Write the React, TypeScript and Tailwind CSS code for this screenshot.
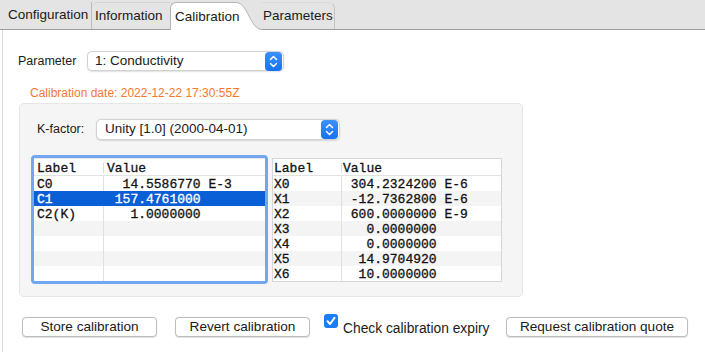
import React from "react";

const Stepper = () => (
  <div className="w-[17px] h-[19px] rounded-[4px] bg-gradient-to-b from-[#3a91ff] to-[#1572f0] flex items-center justify-center shrink-0">
    <svg width="17" height="19" viewBox="0 0 17 19">
      <path d="M5.5 7.5 L8.5 4.5 L11.5 7.5" fill="none" stroke="white" strokeWidth="1.5" strokeLinecap="round" strokeLinejoin="round" />
      <path d="M5.5 11.5 L8.5 14.5 L11.5 11.5" fill="none" stroke="white" strokeWidth="1.5" strokeLinecap="round" strokeLinejoin="round" />
    </svg>
  </div>
);

const leftRows: [string, string][] = [
  ["C0", "  14.5586770 E-3"],
  ["C1", " 157.4761000"],
  ["C2(K)", "   1.0000000"],
  ["", ""],
  ["", ""],
  ["", ""],
  ["", ""],
];

const rightRows: [string, string][] = [
  ["X0", " 304.2324200 E-6"],
  ["X1", " -12.7362800 E-6"],
  ["X2", " 600.0000000 E-9"],
  ["X3", "   0.0000000"],
  ["X4", "   0.0000000"],
  ["X5", "  14.9704920"],
  ["X6", "  10.0000000"],
];

const mono = "font-['Liberation_Mono',monospace] text-[13px] whitespace-pre [-webkit-text-stroke:0.3px]";

function Table({
  rows,
  labelW,
  pad,
  selected,
}: {
  rows: [string, string][];
  labelW: string;
  pad: string;
  selected?: number;
}) {
  return (
    <div className="flex flex-col bg-white">
      <div className="h-[17px] flex items-start border-b border-[#e2e2e2] text-[#111]">
        <div className={`${labelW} ${pad} ${mono} leading-[15px] pt-[2px] h-full relative`}>
          Label
          <div className="absolute right-0 top-[4px] h-[10px] w-px bg-[#dcdcdc]" />
        </div>
        <div className={`flex-1 ${pad} ${mono} leading-[15px] pt-[2px]`}>Value</div>
      </div>
      <div className="relative">
        {rows.map((r, i) => {
          const sel = i === selected;
          const bg = sel ? "bg-[#0a5fd6] text-white" : i % 2 === 1 ? "bg-[#f4f4f4] text-[#111]" : "bg-white text-[#111]";
          return (
            <div key={i} className={`h-[15px] flex ${bg}`}>
              <div className={`${labelW} ${pad} ${mono} leading-[13px] pt-[2px] ${sel ? "" : "border-r border-[#e0e0e0]"}`}>{r[0]}</div>
              <div className={`flex-1 ${pad} ${mono} leading-[13px] pt-[2px]`}>{r[1]}</div>
            </div>
          );
        })}
      </div>
    </div>
  );
}

const Button = ({ w, children }: { w: string; children: React.ReactNode }) => (
  <div
    className={`${w} h-[20px] mt-[3px] rounded-[4px] bg-white border border-[#bdbdbd] shadow-[0_0.5px_1px_rgba(0,0,0,0.12)] flex items-center justify-center text-[13.6px] text-[#1a1a1a] leading-none`}
  >
    {children}
  </div>
);

export default function App() {
  return (
    <div className="w-[705px] h-[352px] bg-white overflow-hidden font-['Liberation_Sans',Arial,sans-serif] text-[#1a1a1a] flex flex-col">
      {/* Tab bar */}
      <div className="h-[30px] shrink-0 bg-[#e4e4e4] border-b border-[#9d9d9d] flex items-end">
        <div className="w-[92px] h-[27px] border-r border-[#bcbcbc] pl-[8px] flex items-center text-[13.5px] whitespace-nowrap">
          Configuration
        </div>
        <div className="w-[78px] h-[27px] border-t border-[#d4d4d4] rounded-tl-[6px] pl-[3px] flex items-center text-[13.5px] whitespace-nowrap">
          Information
        </div>
        <div className="w-[66px] h-[28px] -mb-px bg-white border-l border-t border-[#b4b4b4] rounded-tl-[6px] pl-[4px] pt-[1px] flex items-center text-[13.5px] whitespace-nowrap relative z-10">
          Calibration
        </div>
        <svg width="26" height="28" viewBox="0 0 26 28" className="-mb-px shrink-0 relative z-0">
          <path d="M0 0.5 C12 0.5 14 27.5 26 27.5 L26 28 L0 28 Z" fill="white" />
          <path d="M0 0.5 C12 0.5 14 27.5 26 27.5" fill="none" stroke="#b4b4b4" strokeWidth="1" />
        </svg>
        <div className="w-[73px] h-[27px] border-r border-t border-[#c4c4c4] border-t-[#dadada] rounded-tr-[6px] pl-[1px] flex items-center text-[13.5px] whitespace-nowrap">
          Parameters
        </div>
      </div>

      {/* Content */}
      <div className="flex-1 ml-[2px] border-l border-[#dadada] pl-[15px] flex flex-col">
        <div className="mt-[21px] h-[20px] flex items-center">
          <div className="w-[69px] text-[12.5px]">Parameter</div>
          <div className="w-[197px] h-[20px] rounded-[5px] bg-white border border-[#d2d2d2] shadow-[0_0.5px_1.5px_rgba(0,0,0,0.12)] flex items-center justify-between pl-[7px] pr-px">
            <span className="text-[13.5px]">1: Conductivity</span>
            <Stepper />
          </div>
        </div>

        <div className="mt-[15px] ml-[12px] h-[14px] text-[12px] leading-[14px] text-[#f5782f]">
          Calibration date: 2022-12-22 17:30:55Z
        </div>

        <div className="mt-[3px] ml-[1px] w-[504px] h-[194px] rounded-[5px] bg-[#f5f5f5] border border-[#e6e6e6] flex flex-col">
          <div className="mt-[15px] ml-[17px] h-[21px] flex items-center">
            <div className="w-[59px] text-[12.5px]">K-factor:</div>
            <div className="w-[244px] h-[21px] rounded-[5px] bg-white border border-[#d2d2d2] shadow-[0_0.5px_1.5px_rgba(0,0,0,0.12)] flex items-center justify-between pl-[8px] pr-px">
              <span className="text-[13.5px]">Unity [1.0] (2000-04-01)</span>
              <Stepper />
            </div>
          </div>

          <div className="mt-[15px] ml-[11px] flex items-start gap-[4px]">
            <div className="w-[237px] border-[3px] border-[#72a6f1] rounded-[4px] overflow-hidden">
              <div className="border-t border-[#e6e6e6]">
                <Table rows={leftRows} labelW="w-[70px]" pad="pl-[3px]" selected={1} />
              </div>
            </div>
            <div className="mt-[3px] w-[230px] border border-[#d6d6d6]">
              <Table rows={rightRows} labelW="w-[69px]" pad="pl-[1px]" />
            </div>
          </div>
        </div>

        <div className="mt-[17px] ml-[4px] flex items-start">
          <Button w="w-[135px]">Store calibration</Button>
          <div className="w-[18px]" />
          <Button w="w-[135px]">Revert calibration</Button>
          <div className="w-[14px]" />
          <div className="w-[14px] h-[14px] rounded-[3px] bg-[#1a7ef5] flex items-center justify-center shrink-0">
            <svg width="14" height="14" viewBox="0 0 14 14">
              <path d="M3.5 7.2 L6 10 L10.5 3.8" fill="none" stroke="white" strokeWidth="2" strokeLinecap="round" strokeLinejoin="round" />
            </svg>
          </div>
          <div className="ml-[5px] mt-[7px] w-[146px] text-[13.8px] leading-[16px] whitespace-nowrap">Check calibration expiry</div>
          <div className="w-[17px]" />
          <Button w="w-[182px]">Request calibration quote</Button>
        </div>
      </div>
    </div>
  );
}
